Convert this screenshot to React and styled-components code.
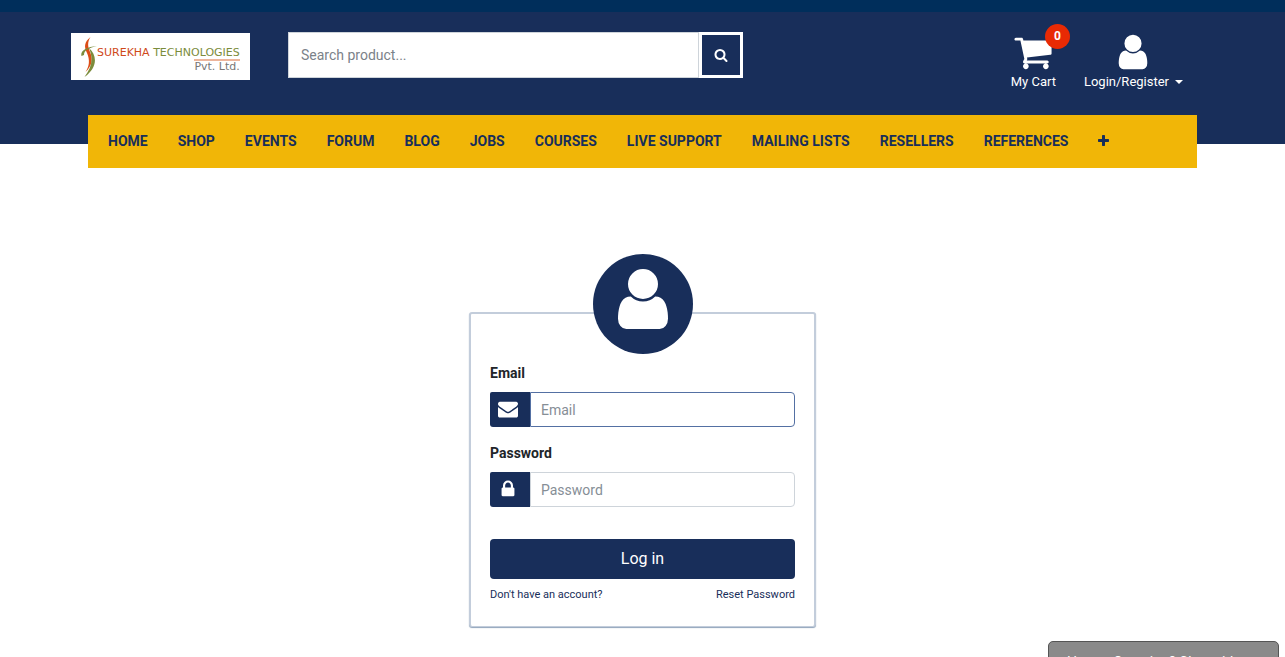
import React from "react";
import styled, { createGlobalStyle } from "styled-components";

const navy = "#182e5a";
const gold = "#f1b607";

const Global = createGlobalStyle`
  * { box-sizing: border-box; }
  html { height: 100%; overflow: hidden; }
  body {
    margin: 0;
    height: 100%;
    overflow: hidden;
    background: #fff;
    color: #212529;
    font: 14px/20px Roboto, "Liberation Sans", sans-serif;
  }
  button, input { font: inherit; margin: 0; }
  a { color: inherit; text-decoration: none; }
`;

const glyphs = {
  user: "M1536 1399q0 109-62.5 187t-150.5 78h-854q-88 0-150.5-78t-62.5-187q0-85 8.5-160.5t31.5-152 58.5-131 94-89 134.5-34.5q131 128 313 128t313-128q76 0 134.5 34.5t94 89 58.5 131 31.5 152 8.5 160.5zm-256-887q0 159-112.5 271.5t-271.5 112.5-271.5-112.5-112.5-271.5 112.5-271.5 271.5-112.5 271.5 112.5 112.5 271.5z",
  cart: "M704 1536q0 52-38 90t-90 38-90-38-38-90 38-90 90-38 90 38 38 90zm896 0q0 52-38 90t-90 38-90-38-38-90 38-90 90-38 90 38 38 90zm128-1088v512q0 24-16.5 42.5t-40.5 21.5l-1044 122q13 60 13 70 0 16-24 64h920q26 0 45 19t19 45-19 45-45 19h-1024q-26 0-45-19t-19-45q0-11 8-31.5t16-36 21.5-40 15.5-29.5l-177-823h-204q-26 0-45-19t-19-45 19-45 45-19h256q16 0 28.5 6.5t19.5 15.5 13 24.5 8 26 5.5 29.5 4.5 26h1201q26 0 45 19t19 45z",
  envelope: "M1792 710v794q0 66-47 113t-113 47h-1472q-66 0-113-47t-47-113v-794q44 49 101 87 362 246 497 345 57 42 92.5 65.5t94.5 48 110 24.5h2q51 0 110-24.5t94.5-48 92.5-65.5q170-123 498-345 57-39 100-87zm0-294q0 79-49 151t-122 123q-376 261-468 325-10 7-42.5 31t-54 38.5-52 32.5-57.5 27-50 9h-2q-23 0-50-9t-57.5-27-52-32.5-54-38.5-42.5-31q-91-64-262-182.5t-205-142.5q-62-42-117-115.5t-55-136.5q0-78 41.5-130t118.5-52h1472q65 0 112.5 47t47.5 113z",
  lock: "M640 768h512v-192q0-106-75-181t-181-75-181 75-75 181v192zm832 96v576q0 40-28 68t-68 28h-960q-40 0-68-28t-28-68v-576q0-40 28-68t68-28h32v-192q0-184 132-316t316-132 316 132 132 316v192h32q40 0 68 28t28 68z",
  search: "M1216 832q0-185-131.5-316.5t-316.5-131.5-316.5 131.5-131.5 316.5 131.5 316.5 316.5 131.5 316.5-131.5 131.5-316.5zm512 832q0 52-38 90t-90 38q-54 0-90-38l-343-342q-179 124-399 124-143 0-273.5-55.5t-225-150-150-225-55.5-273.5 55.5-273.5 150-225 225-150 273.5-55.5 273.5 55.5 225 150 150 225 55.5 273.5q0 220-124 399l343 343q37 37 37 90z",
  plus: "M1600 736v192q0 40-28 68t-68 28h-416v416q0 40-28 68t-68 28h-192q-40 0-68-28t-28-68v-416h-416q-40 0-68-28t-28-68v-192q0-40 28-68t68-28h416v-416q0-40 28-68t68-28h192q40 0 68 28t28 68v416h416q40 0 68 28t28 68z",
};

const Glyph = styled.svg`
  display: block;
  flex: none;
  width: ${(p) => p.$size}px;
  height: ${(p) => p.$size}px;
  fill: currentColor;
`;

function Icon({ name, size, box = "0 0 1792 1792" }) {
  return (
    <Glyph $size={size} viewBox={box} aria-hidden="true">
      <path d={glyphs[name]} />
    </Glyph>
  );
}

const Page = styled.div`
  min-height: 100%;
`;

const Header = styled.header`
  height: 144px;
  background: ${navy};
  border-top: 12px solid #002e5b;
`;

const Container = styled.div`
  max-width: 1143px;
  margin: 0 auto;
`;

const TopRow = styled.div`
  display: flex;
  align-items: flex-start;
  height: 103px;
  padding: 20px 31px 0 0;
`;

const Logo = styled.a`
  display: flex;
  width: 179px;
  height: 47px;
  margin: 1px 38px 0 0;
  padding: 0 9px;
  background: #fff;
`;

const LogoMark = styled.svg`
  flex: none;
  width: 17px;
  height: 47px;
`;

const LogoWords = styled.span`
  display: flex;
  flex-direction: column;
  flex: none;
  padding-top: 13px;
  font: 11px/13px "DejaVu Sans", sans-serif;
  color: #7b8c3c;
  white-space: nowrap;
`;

const LogoName = styled.span`
  em { font-style: normal; color: #cf4a1b; }
`;

const LogoSuffix = styled.span`
  align-self: flex-end;
  border-top: 2px solid #ecb59c;
  color: #777;
  line-height: 11px;
`;

const Search = styled.form`
  display: flex;
  width: 455px;
  height: 46px;
  background: #fff;
`;

const SearchInput = styled.input`
  flex: 1;
  min-width: 0;
  padding: 0 12px;
  border: 1px solid #ced4da;
  background: #fff;
  color: #495057;
  outline: none;
  &::placeholder { color: #7b8289; opacity: 1; }
`;

const SearchButton = styled.button`
  display: grid;
  place-items: center;
  width: 44px;
  padding: 0;
  border: 3px solid #fff;
  background: ${navy};
  color: #fff;
`;

const Actions = styled.nav`
  display: flex;
  gap: 28px;
  margin-left: auto;
`;

const Action = styled.a`
  position: relative;
  display: flex;
  flex-direction: column;
  align-items: center;
  color: #fff;
  font-size: 13px;
`;

const ActionLabel = styled.span`
  display: flex;
  align-items: center;
  gap: 6px;
`;

const Caret = styled.span`
  border: 4px solid transparent;
  border-top-color: #fff;
  border-bottom: 0;
`;

const Badge = styled.span`
  position: absolute;
  top: -8px;
  right: -14px;
  width: 25px;
  height: 25px;
  border-radius: 50%;
  background: #e82a04;
  color: #fff;
  font-size: 12px;
  font-weight: 700;
  line-height: 25px;
  text-align: center;
`;

const MainNav = styled.nav`
  display: flex;
  align-items: center;
  gap: 30px;
  height: 53px;
  margin: 0 17px;
  padding: 0 20px 2px;
  background: ${gold};
`;

const NavLink = styled.a`
  color: ${navy};
  font-weight: 700;
  white-space: nowrap;
`;

const Main = styled.main`
  display: flex;
  justify-content: center;
  padding-top: 110px;
`;

const LoginCard = styled.form`
  display: flex;
  flex-direction: column;
  align-items: stretch;
  width: 347px;
  margin-top: 58px;
  padding: 0 19px 21px;
  border: 2px solid #c3cddb;
  border-bottom-width: 1px;
  border-radius: 3px;
  background: #fff;
  box-shadow: 0 1px 1px #8fa3bb;
`;

const Avatar = styled.div`
  display: grid;
  place-items: center;
  align-self: center;
  width: 100px;
  height: 100px;
  margin-top: -60px;
  padding-bottom: 10px;
  border-radius: 50%;
  background: ${navy};
  color: #fff;
`;

const Label = styled.label`
  margin-top: ${(p) => p.$top}px;
  font-weight: 700;
`;

const Field = styled.div`
  display: flex;
  height: 35px;
  margin-top: 9px;
`;

const FieldIcon = styled.span`
  display: flex;
  align-items: center;
  width: 40px;
  padding: 0 0 2px 8px;
  border-radius: 2px 0 0 3px;
  background: ${navy};
  color: #fff;
`;

const FieldInput = styled.input`
  flex: 1;
  min-width: 0;
  padding: 0 10px;
  border: 1px solid ${(p) => (p.$active ? "#5470a3" : "#ced4da")};
  border-radius: 0 4px 4px 0;
  background: #fff;
  color: #495057;
  outline: none;
  &::placeholder { color: #868e96; opacity: 1; }
`;

const Submit = styled.button`
  height: 40px;
  margin-top: 32px;
  border: 0;
  border-radius: 4px;
  background: ${navy};
  color: #fff;
  font-size: 16px;
`;

const Links = styled.div`
  display: flex;
  justify-content: space-between;
  margin-top: 6px;
  color: ${navy};
  font-size: 11px;
`;

const ChatButton = styled.button`
  position: fixed;
  right: 6px;
  bottom: -24px;
  width: 231px;
  height: 40px;
  padding: 2px 0 0;
  border: 1px solid #555;
  border-radius: 5px;
  background: #8a8a8a;
  color: #fff;
`;

const sections = [
  "HOME", "SHOP", "EVENTS", "FORUM", "BLOG", "JOBS", "COURSES",
  "LIVE SUPPORT", "MAILING LISTS", "RESELLERS", "REFERENCES",
];

export default function App() {
  return (
    <Page>
      <Global />
      <Header>
        <Container>
          <TopRow>
            <Logo href="#home">
              <LogoMark viewBox="0 0 17 47" aria-hidden="true">
                <path d="M10.500 4C4 9 4 14 7 20C10 27 9.500 33 5.500 39C13 32 12.500 25 10 19C7.500 13 7.500 9 10.500 4Z" fill="#dc4d17" />
                <path d="M1.500 23C0 18 6 14 17 13C9 15 4 17 4 22ZM9 15C18 23 17 35 4.500 44C12 34 13.500 26 9 15Z" fill="#7b8c3c" />
              </LogoMark>
              <LogoWords>
                <LogoName><em>SUREKHA</em> TECHNOLOGIES</LogoName>
                <LogoSuffix>Pvt. Ltd.</LogoSuffix>
              </LogoWords>
            </Logo>
            <Search>
              <SearchInput type="search" placeholder="Search product..." aria-label="Search product" />
              <SearchButton type="button" aria-label="Search">
                <Icon name="search" size={14} />
              </SearchButton>
            </Search>
            <Actions>
              <Action href="#cart">
                <Icon name="cart" size={40} />
                <ActionLabel>My Cart</ActionLabel>
                <Badge>0</Badge>
              </Action>
              <Action href="#login">
                <Icon name="user" size={40} />
                <ActionLabel>Login/Register <Caret /></ActionLabel>
              </Action>
            </Actions>
          </TopRow>
          <MainNav>
            {sections.map((name) => (
              <NavLink key={name} href="#section">{name}</NavLink>
            ))}
            <NavLink href="#more" aria-label="More">
              <Icon name="plus" size={11} box="192 128 1408 1408" />
            </NavLink>
          </MainNav>
        </Container>
      </Header>
      <Main>
        <LoginCard>
          <Avatar><Icon name="user" size={70} /></Avatar>
          <Label htmlFor="email" $top={9}>Email</Label>
          <Field>
            <FieldIcon><Icon name="envelope" size={20} /></FieldIcon>
            <FieldInput id="email" type="email" placeholder="Email" $active />
          </Field>
          <Label htmlFor="password" $top={16}>Password</Label>
          <Field>
            <FieldIcon><Icon name="lock" size={20} /></FieldIcon>
            <FieldInput id="password" type="password" placeholder="Password" />
          </Field>
          <Submit type="button">Log in</Submit>
          <Links>
            <a href="#signup">Don't have an account?</a>
            <a href="#reset">Reset Password</a>
          </Links>
        </LoginCard>
      </Main>
      <ChatButton type="button">Have a Question? Chat with us.</ChatButton>
    </Page>
  );
}
